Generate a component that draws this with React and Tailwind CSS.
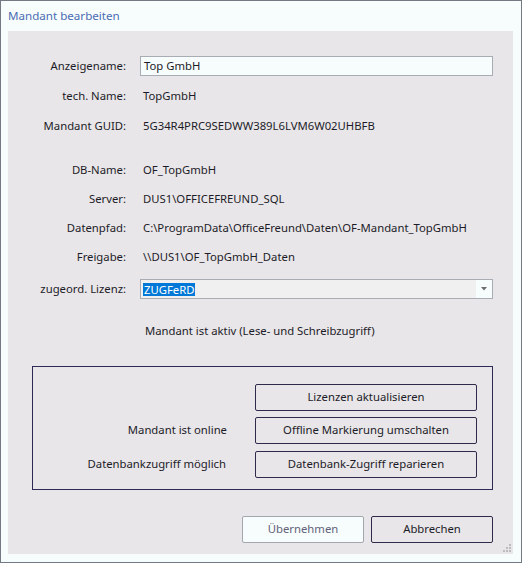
import React from "react";

const font = { fontFamily: '"Noto Sans", "Open Sans", sans-serif' };

function Row({ label, children, className = "" }) {
  return (
    <div className={`flex items-center h-[20px] ${className}`}>
      <div className="w-[118px] text-right whitespace-nowrap">{label}</div>
      <div className="ml-[14px] w-[353px] flex items-center h-full">{children}</div>
    </div>
  );
}

function Btn({ children }) {
  return (
    <div className="w-[222px] h-[27px] border border-[#2f2b4a] rounded-[2px] flex items-center justify-center">
      {children}
    </div>
  );
}

export default function App() {
  return (
    <div
      className="w-[522px] h-[563px] bg-[#f7fcfc] border border-[#747a84] flex flex-col text-[11.3px] text-[#1c1c28]"
      style={font}
    >
      <div className="h-[30px] flex items-center pl-[7px] text-[#4a6cb3] text-[11.6px]">Mandant bearbeiten</div>
      <div className="relative ml-[7px] w-[505px] h-[523px] bg-[#e9e6e9] flex flex-col pt-[25px]">
        <Row label="Anzeigename:">
          <div className="w-full h-[20px] bg-[#f7fcfc] border border-[#a9adb3] flex items-center pl-[3px]">Top GmbH</div>
        </Row>
        <Row label="tech. Name:" className="mt-[10px]">
          <span className="pl-[3px]">TopGmbH</span>
        </Row>
        <Row label="Mandant GUID:" className="mt-[10px]">
          <span className="pl-[3px]">5G34R4PRC9SEDWW389L6LVM6W02UHBFB</span>
        </Row>
        <Row label="DB-Name:" className="mt-[24px]">
          <span className="pl-[3px]">OF_TopGmbH</span>
        </Row>
        <Row label="Server:" className="mt-[9px]">
          <span className="pl-[3px]">DUS1\OFFICEFREUND_SQL</span>
        </Row>
        <Row label="Datenpfad:" className="mt-[9px]">
          <span className="pl-[3px] whitespace-nowrap">C:\ProgramData\OfficeFreund\Daten\OF-Mandant_TopGmbH</span>
        </Row>
        <Row label="Freigabe:" className="mt-[9px]">
          <span className="pl-[3px]">\\DUS1\OF_TopGmbH_Daten</span>
        </Row>
        <Row label="zugeord. Lizenz:" className="mt-[12px]">
          <div className="w-full h-[20px] bg-[#f0f0f0] border border-[#a9adb3] flex items-center pl-[2px]">
            <span className="bg-[#0078d7] text-white h-[13px] leading-[13px] px-[1px]">ZUGFeRD</span>
            <div className="ml-auto w-[16px] h-full bg-[#f7fcfc] flex items-center justify-center">
              <svg width="6" height="4" viewBox="0 0 6 4">
                <path d="M0 0 H6 L3 3.5 Z" fill="#6e6e6e" />
              </svg>
            </div>
          </div>
        </Row>
        <div className="mt-[22px] h-[20px] flex items-center pl-[137px]">Mandant ist aktiv (Lese- und Schreibzugriff)</div>
        <div className="mt-[25px] ml-[24px] w-[461px] h-[124px] border border-[#2d2a55] flex flex-col pt-[17px] pr-[15px]">
          <div className="flex items-center justify-end">
            <Btn>Lizenzen aktualisieren</Btn>
          </div>
          <div className="flex items-center justify-end mt-[6px]">
            <span className="mr-[28px]">Mandant ist online</span>
            <Btn>Offline Markierung umschalten</Btn>
          </div>
          <div className="flex items-center justify-end mt-[7px]">
            <span className="mr-[29px]">Datenbankzugriff möglich</span>
            <Btn>Datenbank-Zugriff reparieren</Btn>
          </div>
        </div>
        <div className="mt-[26px] flex justify-end pr-[20px] gap-[7px]">
          <div className="w-[122px] h-[27px] bg-[#f7fcfc] border border-[#a3a6ab] rounded-[2px] flex items-center justify-center text-[#62627a]">
            Übernehmen
          </div>
          <div className="w-[122px] h-[27px] border border-[#2f2b4a] rounded-[2px] flex items-center justify-center">
            Abbrechen
          </div>
        </div>
        <svg className="absolute right-[1px] bottom-[1px]" width="9" height="9" viewBox="0 0 9 9">
          <rect x="6" y="0" width="2" height="2" fill="#bcbcbc" />
          <rect x="3" y="3" width="2" height="2" fill="#bcbcbc" />
          <rect x="6" y="3" width="2" height="2" fill="#bcbcbc" />
          <rect x="0" y="6" width="2" height="2" fill="#bcbcbc" />
          <rect x="3" y="6" width="2" height="2" fill="#bcbcbc" />
          <rect x="6" y="6" width="2" height="2" fill="#bcbcbc" />
        </svg>
      </div>
    </div>
  );
}
